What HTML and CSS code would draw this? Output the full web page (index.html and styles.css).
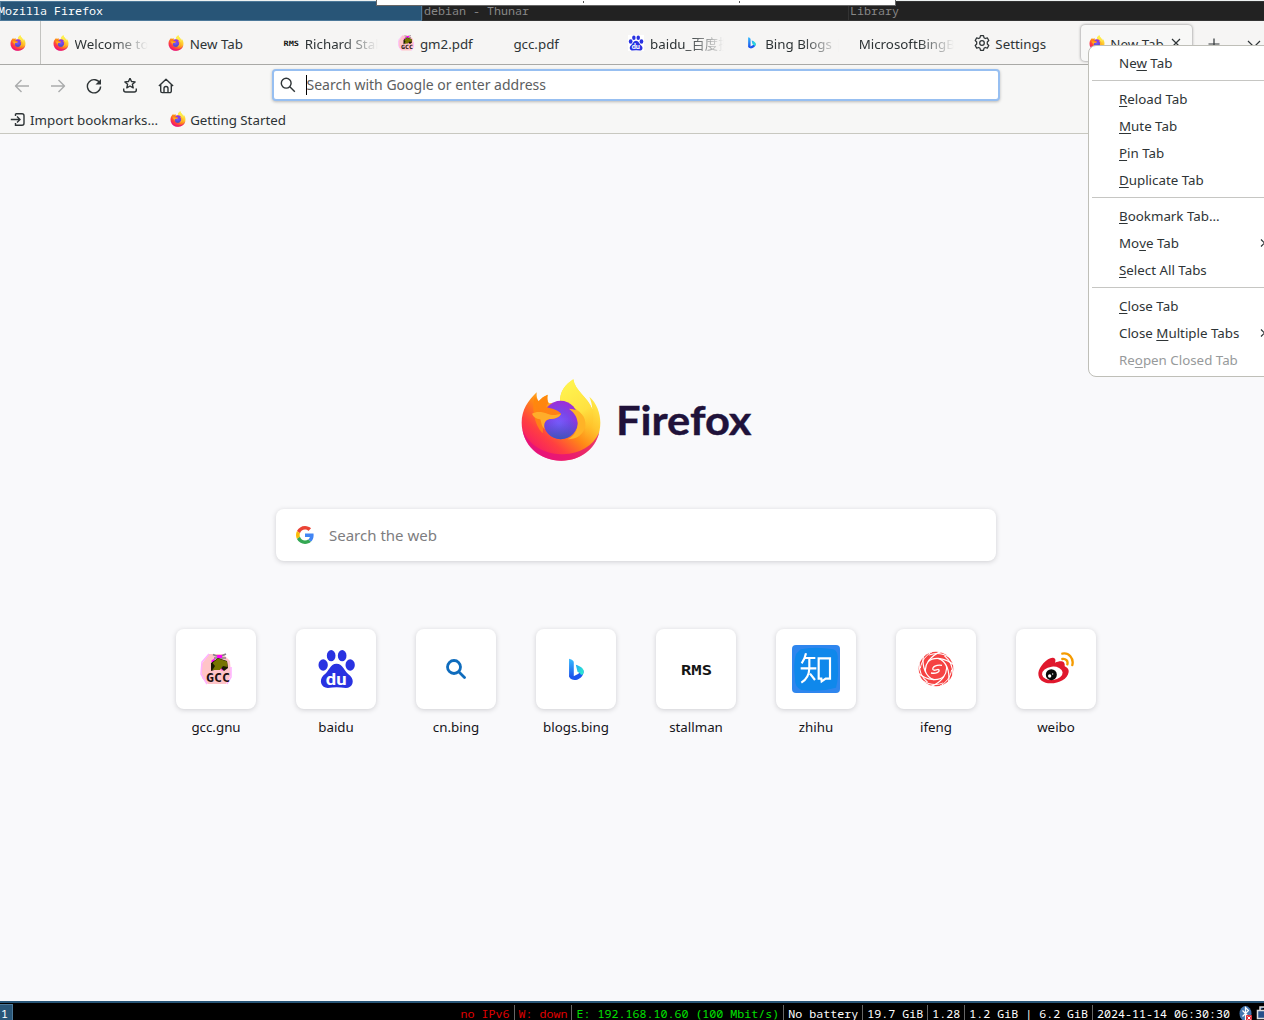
FILE: index.html
```html
<!DOCTYPE html>
<html lang="en">
<head>
<meta charset="utf-8">
<title>Mozilla Firefox</title>
<link rel="stylesheet" href="styles.css">
</head>
<body>
<svg class="defs" width="0" height="0" aria-hidden="true">
  <defs>
    <linearGradient id="g-body" x1="0.88" y1="0.12" x2="0.2" y2="0.95">
      <stop offset="0" stop-color="#fff44f"/><stop offset="0.32" stop-color="#ffc52e"/><stop offset="0.54" stop-color="#ff8a16"/><stop offset="0.76" stop-color="#ff4040"/><stop offset="1" stop-color="#f5156c"/>
    </linearGradient>
    <linearGradient id="g-flame" x1="0.4" y1="0" x2="0.7" y2="1">
      <stop offset="0" stop-color="#fff44f"/><stop offset="0.55" stop-color="#ffe141"/><stop offset="1" stop-color="#ffb01b" stop-opacity="0"/>
    </linearGradient>
    <radialGradient id="g-globe" cx="0.45" cy="0.6" r="0.65">
      <stop offset="0" stop-color="#7b5cff"/><stop offset="0.5" stop-color="#7a45e8"/><stop offset="1" stop-color="#a429d4"/>
    </radialGradient>
    <linearGradient id="g-globe2" x1="0" y1="0.5" x2="0" y2="1">
      <stop offset="0" stop-color="#4b4fd0" stop-opacity="0"/><stop offset="1" stop-color="#3f56b8"/>
    </linearGradient>
    <linearGradient id="g-head" x1="0.2" y1="0" x2="0.5" y2="1">
      <stop offset="0" stop-color="#ff8a0a"/><stop offset="1" stop-color="#ff7a1c"/>
    </linearGradient>
    <linearGradient id="g-bing" x1="0" y1="0" x2="0" y2="1">
      <stop offset="0" stop-color="#37bdff"/><stop offset="1" stop-color="#1a4be8"/>
    </linearGradient>
    <linearGradient id="g-bing2" x1="0" y1="0" x2="1" y2="0.6">
      <stop offset="0" stop-color="#22a8f5"/><stop offset="1" stop-color="#2bead0"/>
    </linearGradient>
    <symbol id="firefox" viewBox="60 24 246 252">
      <path fill="url(#g-body)" d="M65 158C65 120 84 92 110 67C109 80 111 88 116 94C124 84 133 78 143 74C141 84 142 92 147 100L181 98C177 65 198 42 220 28C224 62 264 82 277 118C276 103 273 92 268 80C290 98 301 130 301 158C301 225 248 272 184 272C118 272 65 222 65 158Z"/>
      <path fill="#e3107f" opacity=".75" d="M68 180C92 236 145 253 190 253C240 251 278 230 298 187C285 240 240 272 184 272C122 272 76 233 68 180Z"/>
      <path fill="url(#g-flame)" d="M181 98C177 65 198 42 220 28C224 62 264 82 277 118C284 150 278 190 254 212C262 160 250 125 220 112Z"/>
      <ellipse cx="182" cy="150" rx="53" ry="58" fill="url(#g-globe)"/>
      <ellipse cx="182" cy="150" rx="53" ry="58" fill="url(#g-globe2)"/>
      <path fill="url(#g-head)" d="M104 80C109 84 112 89 116 94C124 84 133 78 143 74C141 84 142 93 145 100C140 105 139 109 139 112C155 116 174 120 183 131C178 143 160 147 149 147C138 149 132 156 130 166L128 190C100 160 95 110 104 80Z"/>
      <path fill="#ffad2a" d="M96 131C108 123 128 125 142 131C158 138 172 134 183 131C178 144 160 147 149 147C136 149 130 160 134 178C121 164 125 152 120 148C108 146 100 141 96 131Z"/>
      <path fill="#ffb327" d="M207 116C240 116 260 142 256 168C252 194 228 208 203 208C224 197 234 180 233 158C231 138 221 127 207 116Z"/>
    </symbol>
    <symbol id="baidu" viewBox="470 102 116 120">
      <g fill="#2932e1"><ellipse cx="512" cy="122" rx="13" ry="17"/><ellipse cx="545" cy="122" rx="13" ry="17"/><ellipse cx="488" cy="150" rx="14" ry="17"/><ellipse cx="569" cy="150" rx="14" ry="17"/>
      <path d="M528 146C508 146 506 170 489 181C474 196 482 219 502 219Q528 214 556 219C576 219 584 197 569 182C551 170 548 146 528 146Z"/></g>
      <text x="527" y="209" text-anchor="middle" textLength="62" lengthAdjust="spacingAndGlyphs" class="du">du</text>
    </symbol>
    <symbol id="bing" viewBox="504 130 50 68">
      <path fill="url(#g-bing)" d="M507 132C512 133 521 136 521 144V186C521 192 512 194 507 184Z"/>
      <path fill="#1c55ee" d="M507 180C512 190 522 185 550 166C552 184 536 195 523 195C512 194 507 188 507 180Z"/>
      <path fill="url(#g-bing2)" d="M527 150C540 154 552 160 550 172C549 181 541 182 540 176L532 171Z"/>
    </symbol>
    <symbol id="gcc" viewBox="0 0 32 32">
      <path fill="#ffc4c8" d="M9 1H23L30 8L31 22L26 31H8L2 25L1 12Z"/>
      <path fill="none" stroke="#ffb2ff" stroke-width="1.5" d="M9 1L2 9L1 21L7 31M31 14V24L27 31"/>
      <path fill="none" stroke="#8b7f8b" stroke-width="1.5" d="M13 1.500Q19 5 26 1M14 5L26 5"/>
      <path fill="#f0f" d="M17 2H22V5H17ZM11 8L15 5L14 11ZM20 14L25 14L22 18Z"/>
      <path fill="#1a1700" d="M11 10L18 5L27 8L28 15L24 18L21 15L11 18Z"/>
      <path fill="#777400" d="M12.500 10L18 5.500L27 8.500L27.500 14L23 13L20 17L12.500 17L15 13Z"/>
      <text x="18" y="28.500" text-anchor="middle" textLength="24" lengthAdjust="spacingAndGlyphs" class="gcc-word">GCC</text>
    </symbol>
    <symbol id="rms" viewBox="0 0 32 16"><text x="16.500" y="13.500" text-anchor="middle" textLength="31" lengthAdjust="spacingAndGlyphs" class="rms-word">RMS</text></symbol>
  </defs>
</svg>

<div class="screen">
  <header class="titles">
    <div class="title title-active">Mozilla Firefox</div>
    <div class="title">debian - Thunar</div>
    <div class="title">Library</div>
    <div class="popup-edge"><i></i><i></i></div>
  </header>

  <nav class="tabs">
    <div class="tab pinned"><svg class="ic"><use href="#firefox"/></svg></div>
    <div class="tab"><svg class="ic"><use href="#firefox"/></svg><span class="label fade">Welcome to Firefox</span></div>
    <div class="tab"><svg class="ic"><use href="#firefox"/></svg><span class="label">New Tab</span></div>
    <div class="tab"><svg class="ic"><use href="#rms"/></svg><span class="label fade">Richard Stallman</span></div>
    <div class="tab"><svg class="ic"><use href="#gcc"/></svg><span class="label">gm2.pdf</span></div>
    <div class="tab"><span class="label">gcc.pdf</span></div>
    <div class="tab"><svg class="ic white"><use href="#baidu"/></svg><span class="label fade">baidu_百度搜索</span></div>
    <div class="tab"><svg class="ic bing-tab"><use href="#bing"/></svg><span class="label fade">Bing Blogs |</span></div>
    <div class="tab"><span class="label fade">MicrosoftBingBlog</span></div>
    <div class="tab"><svg class="ic" viewBox="0 0 16 16" fill="none" stroke="#2e3436" stroke-width="1.25" stroke-linejoin="round"><path d="M6.500.7h3l.5 2 1.300.8 2-.6 1.500 2.600-1.500 1.500v2l1.500 1.500-1.500 2.600-2-.6-1.300.8-.5 2h-3l-.5-2-1.300-.8-2 .6L1.200 10.500 2.700 9V7L1.200 5.500 2.700 2.900l2 .6L6 2.700Z"/><circle cx="8" cy="8" r="2.300"/></svg><span class="label">Settings</span></div>
    <div class="tab selected"><svg class="ic"><use href="#firefox"/></svg><span class="label">New Tab</span><svg class="close" viewBox="0 0 10 10"><path d="M1 1l8 8M9 1l-8 8"/></svg></div>
    <svg class="plus" viewBox="0 0 12 12"><path d="M6 .5v11M.5 6h11"/></svg>
    <svg class="down" viewBox="0 0 14 8"><path d="M1 1l6 6 6-6"/></svg>
  </nav>

  <div class="toolbar">
    <div class="buttons">
      <svg class="dim" viewBox="0 0 16 16"><path d="M15 8H1.500M7.500 2L1.500 8l6 6"/></svg>
      <svg class="dim" viewBox="0 0 16 16"><path d="M1 8h13.500M8.500 2l6 6-6 6"/></svg>
      <svg viewBox="0 0 16 16"><path d="M14 5.500A6.600 6.600 0 1 0 14.600 8.500"/><path class="solid" d="M15 1v5.500H9.500Z"/></svg>
      <svg viewBox="0 0 16 16"><path d="M8 .2l1.500 3.300 3.600.4-2.700 2.400.8 3.500L8 8l-3.200 1.800.8-3.500L2.900 3.900l3.600-.4ZM1.700 10.500V12a2 2 0 0 0 2 2h8.600a2 2 0 0 0 2-2v-1.500"/></svg>
      <svg viewBox="0 0 16 16"><path d="M.9 8L8 1.200 15.100 8M2.700 6.800V13a1.600 1.600 0 0 0 1.600 1.600h7.400a1.600 1.600 0 0 0 1.600-1.600V6.800M6 14.500V10.500a2 2 0 0 1 4 0v4"/></svg>
    </div>
    <div class="urlbar">
      <svg viewBox="0 0 16 16"><circle cx="6.200" cy="6.200" r="4.900"/><path d="M9.800 9.800l5 5"/></svg>
      <span class="caret"></span><span class="placeholder">Search with Google or enter address</span>
    </div>
  </div>

  <div class="bookmarks">
    <div class="mark"><svg class="import" viewBox="0 0 16 16"><path d="M5.500 1.700H12a2 2 0 0 1 2 2v7.600a2 2 0 0 1-2 2H5.500V11M5.500 4V1.700M.8 7.500h9M7 4.500l3 3-3 3"/></svg>Import bookmarks...</div>
    <div class="mark"><svg class="ic"><use href="#firefox"/></svg>Getting Started</div>
  </div>

  <main>
    <div class="brand">
      <svg class="brand-logo"><use href="#firefox"/></svg>
      <svg class="brand-word" viewBox="0 0 140 50"><text x="0" y="37" textLength="135.500" lengthAdjust="spacingAndGlyphs">Firefox</text></svg>
    </div>
    <div class="search">
      <svg viewBox="0 0 48 48"><path fill="#ea4335" d="M24 9.500c3.540 0 6.710 1.220 9.210 3.600l6.850-6.850C35.900 2.380 30.470 0 24 0 14.620 0 6.510 5.380 2.560 13.220l7.980 6.190C12.430 13.720 17.740 9.500 24 9.500z"/><path fill="#4285f4" d="M46.980 24.550c0-1.570-.15-3.090-.38-4.550H24v9.020h12.940c-.58 2.960-2.260 5.480-4.780 7.180l7.730 6c4.510-4.180 7.090-10.360 7.090-17.650z"/><path fill="#fbbc05" d="M10.530 28.590c-.48-1.450-.76-2.990-.76-4.590s.27-3.140.76-4.590l-7.980-6.190C.92 16.460 0 20.120 0 24c0 3.880.92 7.540 2.560 10.780l7.970-6.190z"/><path fill="#34a853" d="M24 48c6.480 0 11.930-2.130 15.890-5.810l-7.730-6c-2.150 1.450-4.920 2.300-8.160 2.300-6.260 0-11.570-4.220-13.470-9.910l-7.980 6.190C6.510 42.620 14.620 48 24 48z"/></svg>
      <span>Search the web</span>
    </div>
    <div class="sites">
      <div class="site"><div class="tile"><svg class="s32"><use href="#gcc"/></svg></div>gcc.gnu</div>
      <div class="site"><div class="tile"><svg class="s39"><use href="#baidu"/></svg></div>baidu</div>
      <div class="site"><div class="tile"><svg class="s20" viewBox="0 0 20 20" fill="none" stroke="#0f6cbd" stroke-width="2.800" stroke-linecap="round"><circle cx="8" cy="8" r="6.500"/><path d="M13 13l5.500 5.500"/></svg></div>cn.bing</div>
      <div class="site"><div class="tile"><svg class="sbing"><use href="#bing"/></svg></div>blogs.bing</div>
      <div class="site"><div class="tile"><svg class="srms"><use href="#rms"/></svg></div>stallman</div>
      <div class="site"><div class="tile"><svg class="s48" viewBox="96 90 144 144"><rect x="96" y="90" width="144" height="144" rx="12" fill="#2f86ee"/><path fill="#0f88eb" d="M122 103Q165 94 220 103Q236 107 233 140Q237 185 228 218Q180 232 124 225Q103 216 105 190Q99 145 108 117Z"/><path fill="none" stroke="#fff" stroke-width="6.500" d="M138 115Q134 134 125 145M133 129H166M122 160H169M148 129V160Q147 190 124 203M150 176L165 195M176 130H210V191H197L185 199L184 191H176Z"/></svg></div>zhihu</div>
      <div class="site"><div class="tile"><svg class="s36" viewBox="-54 -54 108 108">
        <circle r="52" fill="#f54343"/>
        <g fill="none" stroke="#fff" stroke-width="3.600"><path id="swirl" d="M-31 10C-36 -14 -16 -40 16 -53"/><use href="#swirl" transform="rotate(60)"/><use href="#swirl" transform="rotate(120)"/><use href="#swirl" transform="rotate(180)"/><use href="#swirl" transform="rotate(240)"/><use href="#swirl" transform="rotate(300)"/></g>
        <g fill="none" stroke="#fff" stroke-width="3"><path id="wisp" d="M-47 -2C-44 -24 -30 -42 -8 -54"/><use href="#wisp" transform="rotate(60)"/><use href="#wisp" transform="rotate(120)"/><use href="#wisp" transform="rotate(180)"/><use href="#wisp" transform="rotate(240)"/><use href="#wisp" transform="rotate(300)"/></g>
        <path d="M18 -11C2 -14 -13 -6 -9 2C-4 8 6 -3 9 3C11 9 0 15 -15 12" fill="none" stroke="#fff" stroke-width="4"/></svg></div>ifeng</div>
      <div class="site"><div class="tile"><svg class="s36" viewBox="837 107 108 108"><path fill="#e0182d" d="M838 173C840 153 866 125 882 127C891 128 890 136 888 142C903 135 919 135 917 151C916 155 931 155 929 170C926 191 901 204 875 204C853 204 837 193 838 173Z"/><ellipse cx="880" cy="174" rx="31" ry="20" fill="#fff" transform="rotate(-6 880 174)"/><circle cx="877" cy="178" r="16.500" fill="#090909"/><circle cx="872" cy="182" r="5" fill="#fff"/><circle cx="881" cy="176" r="2" fill="#fff"/><path fill="none" stroke="#f59b00" stroke-width="7" stroke-linecap="round" d="M910 115C929 111 945 129 940 149M910 131C920 129 928 137 925 147"/></svg></div>weibo</div>
    </div>
  </main>

  <footer class="status">
    <span class="workspace">1</span>
    <div class="blocks">
      <span class="bad">no IPv6</span><span class="bad">W: down</span><span class="good">E: 192.168.10.60 (100 Mbit/s)</span><span>No battery</span><span>19.7 GiB</span><span>1.28</span><span>1.2 GiB | 6.2 GiB</span><span>2024-11-14 06:30:30</span>
    </div>
    <svg class="tray" viewBox="0 0 26 16"><ellipse cx="6.500" cy="7.500" rx="6" ry="7.500" fill="#4477b0"/><path d="M3.500 4.500l6 6-3 3V1.500l3 3-6 6" fill="none" stroke="#fff" stroke-width="1.200"/><rect x="7" y="9" width="6" height="6" rx="1" fill="#e0323a"/><path d="M8.500 10.500l3 3M11.500 10.500l-3 3" stroke="#fff"/><path d="M18.500 4.500h8v8h-8zM21 4V1h5" fill="#27508a" stroke="#ddd" stroke-width="1.500"/></svg>
  </footer>

  <div class="menu">
    <div class="item">Ne<u>w</u> Tab</div><hr>
    <div class="item"><u>R</u>eload Tab</div><div class="item"><u>M</u>ute Tab</div><div class="item"><u>P</u>in Tab</div><div class="item"><u>D</u>uplicate Tab</div><hr>
    <div class="item"><u>B</u>ookmark Tab...</div><div class="item sub">Mo<u>v</u>e Tab<svg viewBox="0 0 6 8"><path d="M1 .5L4.500 4 1 7.500"/></svg></div><div class="item"><u>S</u>elect All Tabs</div><hr>
    <div class="item"><u>C</u>lose Tab</div><div class="item sub">Close <u>M</u>ultiple Tabs<svg viewBox="0 0 6 8"><path d="M1 .5L4.500 4 1 7.500"/></svg></div><div class="item off">Re<u>o</u>pen Closed Tab</div>
  </div>
</div>
</body>
</html>
```

FILE: styles.css
```css
* { box-sizing: border-box; }
body { margin: 0; overflow: hidden; font: 13.333px "Noto Sans", "Noto Sans CJK SC", sans-serif; color: #2e3436; }
svg { flex: none; display: block; }
.defs { position: absolute; }
.screen { position: relative; width: 1264px; height: 1020px; overflow: hidden; display: flex; flex-direction: column; background: #f9f9fb; }

/* window manager title bar */
.titles { position: relative; flex: none; height: 21px; display: grid; grid-template-columns: 422px 426px 1fr; background: #222; border-top: 1px solid #eef2f2; font: 11.667px/20px "Noto Sans Mono", "DejaVu Sans Mono", monospace; }
.title { color: #888; padding-left: 1px; border: 1px solid #333; border-right: 0; line-height: 18px; white-space: pre; }
.title-active { background: #285577; color: #fff; border: 1px solid #4c7899; padding: 0; text-indent: -3px; }
.popup-edge { position: absolute; left: 376px; top: -1px; width: 520px; height: 6px; background: #fff; border: 1px solid #666; border-top: 0; display: flex; }
.popup-edge i { width: 1px; height: 2px; margin-top: 1px; background: #555; margin-left: 206px; }
.popup-edge i + i { margin-left: 155px; }

.tabs { flex: none; height: 44px; display: flex; align-items: center; background: #f6f5f4; border-bottom: 1px solid #a9a9a6; padding-top: 3px; }
.tab { width: 115.1px; flex: none; display: flex; align-items: center; gap: 5.6px; padding-left: 12px; }
.tab.pinned { width: 41px; height: 43px; margin-top: -3px; padding: 3px 0 0 10px; border-right: 1px solid #c3c3c0; }
.ic { width: 16px; height: 16px; margin-top: -2px; }
.white { background: #fff; }
.bing-tab { height: 12px; }
.label { white-space: nowrap; line-height: 20px; }
.fade { flex: 1; margin-right: 8px; min-width: 0; overflow: hidden; -webkit-mask-image: linear-gradient(to left, transparent, #000 36px); mask-image: linear-gradient(to left, transparent, #000 36px); }
.tab.selected { width: 111px; height: 36px; margin: -3px 0 0 4.400px; padding: 3px 0 0 7.500px; border-radius: 4px; background: #f8f8f7; box-shadow: 0 0 3px rgba(0,0,0,.5); }
.close { width: 10px; height: 10px; margin-left: 2px; margin-top: -2px; }
.close path, .plus path, .down path, .sub path { fill: none; stroke: #2e3436; stroke-width: 1.2; }
.plus { width: 12px; height: 12px; margin-left: 15.6px; margin-top: -1px; }
.down { width: 14px; height: 8px; margin-left: 27.4px; margin-top: -1px; }

.toolbar { flex: none; height: 41px; background: #f7f7f6; display: flex; padding-top: 4px; }
.buttons { width: 272px; padding: 0 0 0 14px; display: flex; align-items: center; gap: 19.9px; height: 33px; }
.buttons svg { width: 16px; height: 16px; fill: none; stroke: #2e3436; stroke-width: 1.4; stroke-linejoin: round; }
.buttons .dim { stroke: #aaacac; }
.buttons .solid { fill: #2e3436; stroke: none; }
.urlbar { width: 728px; height: 32px; border: 2px solid #97bff1; border-radius: 4px; background: #fff; box-shadow: 0 1px 3px rgba(0,0,0,.25); display: flex; align-items: center; padding-left: 6px; }
.urlbar svg { width: 16px; height: 16px; fill: none; stroke: #2e3436; stroke-width: 1.4; }
.caret { width: 1px; height: 20px; background: #000; margin-left: 10px; }
.placeholder { font-size: 14px; color: #5c5e60; white-space: nowrap; margin: -1px 0 0 -.5px; }
.bookmarks { flex: none; height: 28px; background: #f7f7f6; border-bottom: 1px solid #c8c8c0; display: flex; gap: 12px; padding-left: 10px; }
.mark { display: flex; align-items: center; height: 28px; gap: 4px; white-space: nowrap; }
.import { width: 16px; height: 16px; fill: none; stroke: #2e3436; stroke-width: 1.4; }

main { flex: 1; display: flex; flex-direction: column; align-items: center; padding: 244px 0 0 8px; color: #15141a; }
.brand { display: flex; height: 84px; gap: 14px; width: 232px; }
.brand-logo { width: 82px; height: 84px; }
.brand-word { width: 140px; height: 50px; margin-top: 20px; overflow: visible; }
.brand-word text { font: 700 41px Lato, sans-serif; fill: #20123a; stroke: #20123a; stroke-width: .4px; }
.search { width: 720px; height: 52px; margin-top: 47px; background: #fff; border-radius: 8px; box-shadow: 0 1px 5px rgba(58,57,68,.22); display: flex; align-items: center; padding-left: 20px; gap: 15px; font-size: 15px; color: #7d7d80; }
.search svg { width: 18px; height: 18px; }
.sites { display: flex; margin-top: 68px; }
.site { width: 120px; display: flex; flex-direction: column; align-items: center; gap: 8px; line-height: 20px; }
.tile { width: 80px; height: 80px; border-radius: 8px; background: #fff; box-shadow: 0 1px 5px rgba(58,57,68,.22); display: grid; place-items: center; }
.s20 { width: 20px; height: 20px; }
.s32 { width: 32px; height: 32px; }
.s36 { width: 36px; height: 36px; }
.s39 { width: 39px; height: 40px; }
.s48 { width: 48px; height: 48px; }
.sbing { width: 17px; height: 23px; }
.srms { width: 32px; height: 16px; overflow: visible; }
.du { font: 700 52px Roboto, sans-serif; fill: #fff; }
.gcc-word { font: 700 11.5px "DejaVu Sans Mono", monospace; fill: #211; }
.rms-word { font: 700 14.5px "DejaVu Sans Mono", monospace; fill: #151515; }

.status { flex: none; height: 19px; background: #000; border-top: 2px solid #285577; display: flex; align-items: flex-start; color: #fff; font: 11.667px/17px "Noto Sans Mono", "DejaVu Sans Mono", monospace; white-space: pre; }
.workspace { width: 13px; height: 17px; margin-top: 1px; padding-left: 1px; background: #285577; border: 1px solid #4c7899; border-left: 0; line-height: 17px; }
.blocks { margin-left: auto; display: flex; padding-top: 2px; }
.blocks span + span { border-left: 1px solid #666; margin-left: 4px; padding-left: 4px; }
.bad { color: #e00000; }
.good { color: #00e000; }
.tray { width: 26px; height: 16px; margin: 3px -1px 0 9px; }

/* tab context menu, runs past the right edge of the screen */
.menu { position: absolute; left: 1088px; top: 45px; width: 200px; height: 332px; background: #fff; border: 1px solid #bfbfb8; border-radius: 8px; padding: 4px 3px; }
.item { height: 27px; line-height: 26px; padding-left: 27px; white-space: nowrap; }
.item u { text-underline-offset: 2px; text-decoration-thickness: 1px; text-decoration-skip-ink: none; }
.sub { display: flex; align-items: flex-start; white-space: pre; }
.sub svg { width: 6px; height: 8px; margin: 9px 18px 0 auto; }
.off { color: #979a9b; }
.menu hr { border: 0; height: 1px; background: #c6c6c3; margin: 3px 0 5px; }
```
